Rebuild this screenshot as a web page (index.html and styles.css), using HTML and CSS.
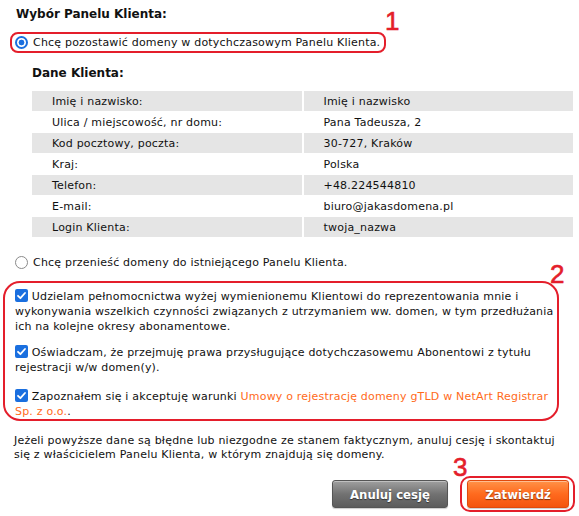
FILE: index.html
```html
<!DOCTYPE html>
<html lang="pl">
<head>
<meta charset="utf-8">
<link rel="stylesheet" href="styles.css">
</head>
<body>
<div class="page">
  <h2 class="title">Wybór Panelu Klienta:</h2>

  <div class="mark mark-1">
    <span class="radio radio-on"></span>
    <span class="label">Chcę pozostawić domeny w dotychczasowym Panelu Klienta.</span>
    <span class="badge badge-1">1</span>
  </div>

  <h3 class="subtitle">Dane Klienta:</h3>
  <table class="data">
    <tr class="odd"><td>Imię i nazwisko:</td><td>Imię i nazwisko</td></tr>
    <tr><td>Ulica / miejscowość, nr domu:</td><td>Pana Tadeusza, 2</td></tr>
    <tr class="odd"><td>Kod pocztowy, poczta:</td><td>30-727, Kraków</td></tr>
    <tr><td>Kraj:</td><td>Polska</td></tr>
    <tr class="odd"><td>Telefon:</td><td>+48.224544810</td></tr>
    <tr><td>E-mail:</td><td>biuro@jakasdomena.pl</td></tr>
    <tr class="odd"><td>Login Klienta:</td><td>twoja_nazwa</td></tr>
  </table>

  <div class="option">
    <span class="radio"></span>
    <span class="label">Chcę przenieść domeny do istniejącego Panelu Klienta.</span>
  </div>

  <div class="mark mark-2">
    <span class="badge badge-2">2</span>
    <p class="check check-1"><span class="box"><svg viewBox="0 0 13 13" width="13" height="13"><path d="M3 6.8 L5.4 9.2 L10 4" fill="none" stroke="#fff" stroke-width="1.8" stroke-linecap="round" stroke-linejoin="round"/></svg></span> Udzielam pełnomocnictwa wyżej wymienionemu Klientowi do reprezentowania mnie i<br>wykonywania wszelkich czynności związanych z utrzymaniem ww. domen, w tym przedłużania<br>ich na kolejne okresy abonamentowe.</p>
    <p class="check check-2"><span class="box"><svg viewBox="0 0 13 13" width="13" height="13"><path d="M3 6.8 L5.4 9.2 L10 4" fill="none" stroke="#fff" stroke-width="1.8" stroke-linecap="round" stroke-linejoin="round"/></svg></span> Oświadczam, że przejmuję prawa przysługujące dotychczasowemu Abonentowi z tytułu<br>rejestracji w/w domen(y).</p>
    <p class="check check-3"><span class="box"><svg viewBox="0 0 13 13" width="13" height="13"><path d="M3 6.8 L5.4 9.2 L10 4" fill="none" stroke="#fff" stroke-width="1.8" stroke-linecap="round" stroke-linejoin="round"/></svg></span> Zapoznałem się i akceptuję warunki <a class="link" href="#">Umowy o rejestrację domeny gTLD w NetArt Registrar<br>Sp. z o.o.</a>.</p>
  </div>

  <p class="note">Jeżeli powyższe dane są błędne lub niezgodne ze stanem faktycznym, anuluj cesję i skontaktuj<br>się z właścicielem Panelu Klienta, w którym znajdują się domeny.</p>

  <div class="actions">
    <button class="btn btn-gray" type="button">Anuluj cesję</button>
    <div class="mark mark-3">
      <span class="badge badge-3">3</span>
      <button class="btn btn-orange" type="button">Zatwierdź</button>
    </div>
  </div>
</div>
</body>
</html>
```

FILE: styles.css
```css
* { box-sizing: border-box; }
html, body { margin: 0; padding: 0; background: #fff; }
body {
  font-family: "DejaVu Sans", Verdana, sans-serif;
  font-size: 11px;
  letter-spacing: 0.2px;
  color: #111;
}
.page { width: 579px; padding-top: 6px; }

.title {
  margin: 0 0 0 16px;
  font-size: 12px;
  font-weight: bold;
  line-height: 16px;
  letter-spacing: 0;
}

.mark { position: relative; border: 2px solid #e41e2b; }
.badge {
  position: absolute;
  color: #e41e2b;
  font-family: "Liberation Sans", Arial, sans-serif;
  font-size: 26px;
  line-height: 25px;
  letter-spacing: 0;
  -webkit-text-stroke: 0.6px #e41e2b;
}

.mark-1 {
  margin: 10px 0 0 10px;
  width: 376px;
  height: 21px;
  border-radius: 8px;
  display: flex;
  align-items: center;
  gap: 5px;
  padding-left: 3px;
}
.badge-1 { left: 373px; top: -25px; }
.label { white-space: nowrap; }

.radio {
  width: 13px; height: 13px;
  border-radius: 50%;
  border: 1px solid #8a8a8a;
  display: inline-block;
  flex: none;
  background: #fff;
}
.radio-on {
  border: 2px solid #1a6fdf;
  background: radial-gradient(circle, #1a6fdf 0 2.6px, #fff 3.2px);
}

.subtitle {
  margin: 12px 0 0 32px;
  font-size: 12px;
  font-weight: bold;
  line-height: 16px;
  letter-spacing: 0;
}
.data {
  margin: 9px 0 0 30px;
  width: 545px;
  border-collapse: separate;
  border-spacing: 2px 1px;
}
.data td {
  height: 20px;
  padding: 0 0 0 20px;
  vertical-align: middle;
  width: 50%;
}
.data tr.odd td { background: #e5e5e5; }

.option {
  margin: 17px 0 0 15px;
  height: 14px;
  display: flex;
  align-items: center;
  gap: 5px;
}

.mark-2 {
  margin: 12px 0 0 3px;
  width: 556px;
  height: 140px;
  border-radius: 17px;
  padding: 6px 0 0 10px;
}
.badge-2 { left: 545px; top: -21px; }

.check {
  margin: 0;
  line-height: 15px;
  white-space: nowrap;
}
.check-2 { margin-top: 11px; }
.check-3 { margin-top: 14px; }
.box {
  display: inline-block;
  width: 13px; height: 13px;
  border-radius: 2px;
  background: #1a6fdf;
  vertical-align: -2px;
}
.box svg { display: block; }
.link { color: #ff6a1a; text-decoration: none; }

.note {
  margin: 13px 0 0 14px;
  line-height: 14px;
  white-space: nowrap;
}

.actions {
  margin-top: 14px;
  display: flex;
  justify-content: flex-end;
  align-items: center;
  padding-right: 4px;
  gap: 12px;
}
.btn {
  font-family: "DejaVu Sans Condensed", "DejaVu Sans", sans-serif;
  font-weight: bold;
  font-size: 13px;
  letter-spacing: 0;
  color: #fff;
  height: 28px;
  border-radius: 3px;
  text-shadow: 0 1px 1px rgba(0,0,0,0.5);
  cursor: pointer;
  padding: 0;
}
.btn-gray {
  width: 116px;
  border: 1px solid #555;
  background: linear-gradient(#a0a0a0, #727272 50%, #5c5c5c);
  box-shadow: inset 0 1px 0 rgba(255,255,255,0.35), 0 1px 1px rgba(0,0,0,0.2);
}
.mark-3 {
  border-radius: 10px;
  padding: 2px 4px 2px 5px;
  display: flex;
}
.badge-3 { left: -9px; top: -23px; }
.btn-orange {
  width: 102px;
  border: 1px solid #e04a0c;
  background: linear-gradient(#ff9248, #ff6a1e 50%, #f4540e);
  box-shadow: inset 0 1px 0 rgba(255,255,255,0.4), 0 1px 1px rgba(0,0,0,0.2);
}
```
